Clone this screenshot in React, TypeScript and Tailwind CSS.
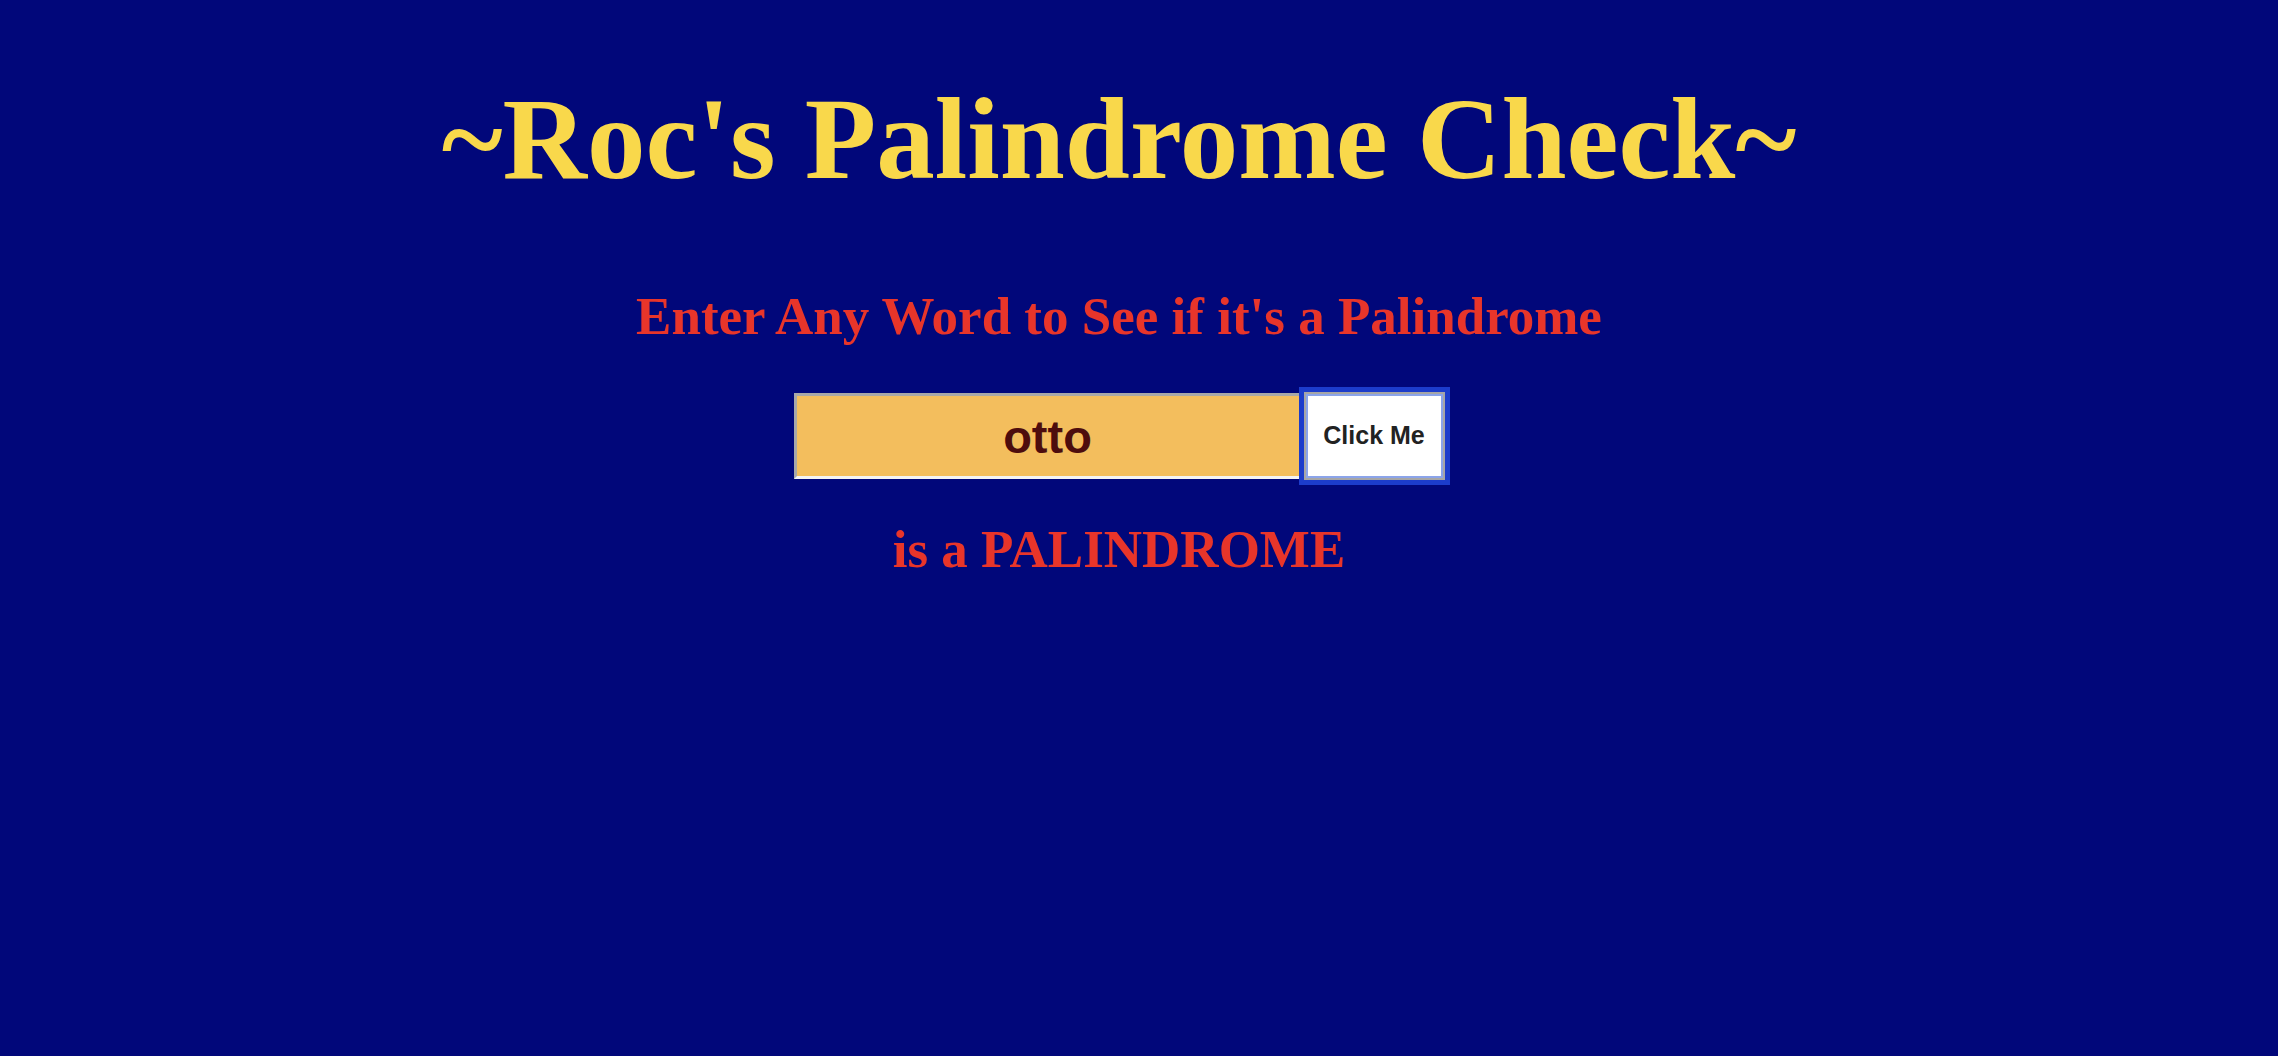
import { useState } from 'react';

const isPalindrome = (word: string) => {
  const clean = word.toLowerCase().replace(/[^a-z0-9]/g, '');
  return clean.length > 0 && clean === clean.split('').reverse().join('');
};

export default function App() {
  const [word, setWord] = useState('otto');
  const [result, setResult] = useState('is a PALINDROME');

  const check = () => {
    setResult(isPalindrome(word) ? 'is a PALINDROME' : 'is NOT a palindrome');
  };

  return (
    <main className="min-h-screen w-full bg-[#01077a]">
      <div className="flex w-[2238px] flex-col items-center pt-[80px] font-['Liberation_Serif','Times_New_Roman',serif] font-bold">
        <h1 className="text-[117px] leading-none text-[#f9d84b]">~Roc's Palindrome Check~</h1>

        <h2 className="mt-[93px] text-[53px] leading-none text-[#e8352a]">
          Enter Any Word to See if it's a Palindrome
        </h2>

        <div className="mt-[49px] flex items-center">
          <input
            value={word}
            onChange={(e) => setWord(e.target.value)}
            className="h-[86px] w-[508px] border-[3px] border-t-[#a8a8a8] border-l-[#a8a8a8] border-r-[#f4f4f4] border-b-[#f4f4f4] bg-[#f3be5d] text-center font-['Liberation_Sans',Arial,sans-serif] text-[47px] font-bold text-[#4d0d0d] outline-none"
          />
          <button
            onClick={check}
            className="ml-[2px] h-[88px] w-[141px] border-2 border-[#a6a6a6] bg-white font-['Liberation_Sans',Arial,sans-serif] text-[25px] font-bold text-[#222] outline-[5px] outline-offset-0 outline-[#1c3ccb] outline-solid shadow-[inset_0_0_0_2px_#8ba4ea]"
          >
            Click Me
          </button>
        </div>

        <p className="mt-[43px] text-[53px] leading-none text-[#e8352a]">{result}</p>
      </div>
    </main>
  );
}
